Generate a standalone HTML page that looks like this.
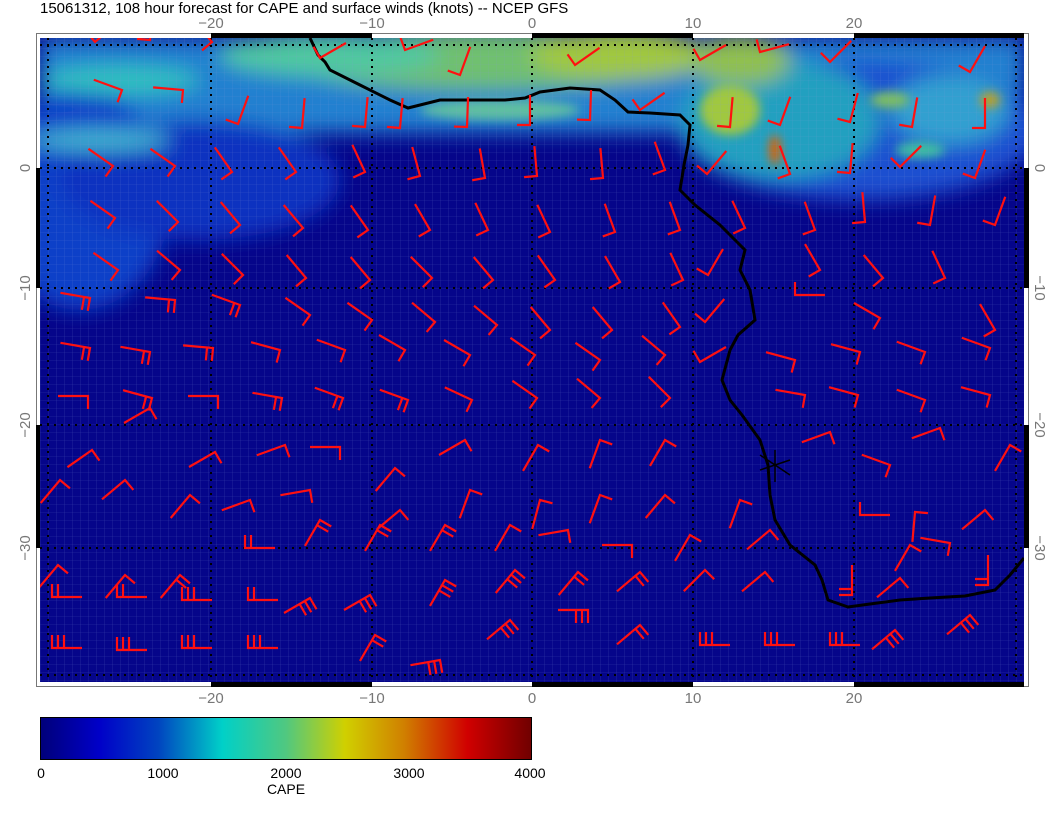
<!DOCTYPE html>
<html><head><meta charset="utf-8"><style>
html,body{margin:0;padding:0;background:#fff;}
body{width:1056px;height:816px;overflow:hidden;font-family:"Liberation Sans",sans-serif;}
</style></head><body>
<svg width="1056" height="816" viewBox="0 0 1056 816" xmlns="http://www.w3.org/2000/svg">
<defs>
<linearGradient id="cb" x1="0" x2="1">
<stop offset="0" stop-color="#00007a"/><stop offset="0.12" stop-color="#0000c8"/><stop offset="0.24" stop-color="#0044c0"/><stop offset="0.37" stop-color="#00d0c8"/><stop offset="0.5" stop-color="#50c880"/><stop offset="0.62" stop-color="#d0d000"/><stop offset="0.74" stop-color="#d08000"/><stop offset="0.87" stop-color="#d00000"/><stop offset="1" stop-color="#700000"/>
</linearGradient>
<filter id="bl" x="-30%" y="-30%" width="160%" height="160%"><feGaussianBlur stdDeviation="10"/></filter>
<filter id="bl2" x="-30%" y="-30%" width="160%" height="160%"><feGaussianBlur stdDeviation="5"/></filter>
<clipPath id="mc"><rect x="40" y="38" width="984" height="644"/></clipPath>
<symbol id="b1" overflow="visible"><path d="M0 -30 L0 0 L-13 0" fill="none" stroke="#ff1010" stroke-width="2.2"/></symbol>
<symbol id="b2" overflow="visible"><path d="M0 -30 L0 0 L-13 0 M0 -6 L-13 -6" fill="none" stroke="#ff1010" stroke-width="2.2"/></symbol>
<symbol id="b3" overflow="visible"><path d="M0 -30 L0 0 L-13 0 M0 -6 L-13 -6 M0 -12 L-13 -12" fill="none" stroke="#ff1010" stroke-width="2.2"/></symbol>
<pattern id="gr" width="8" height="8" patternUnits="userSpaceOnUse"><path d="M0 0H8M0 0V8" stroke="#8a9ad8" stroke-width="0.6" opacity="0.35"/></pattern>
</defs>
<text x="40" y="13" font-size="15" fill="#000">15061312, 108 hour forecast for CAPE and surface winds (knots) -- NCEP GFS</text>
<!-- frame -->
<rect x="36.5" y="33.5" width="992" height="653" fill="#fff" stroke="#777" stroke-width="1"/>
<g fill="#000">
<rect x="211" y="33" width="161" height="5"/><rect x="532" y="33" width="161" height="5"/><rect x="854" y="33" width="170" height="5"/>
<rect x="211" y="682" width="161" height="5"/><rect x="532" y="682" width="161" height="5"/><rect x="854" y="682" width="170" height="5"/>
<rect x="36" y="168" width="5" height="120"/><rect x="36" y="425" width="5" height="123"/>
<rect x="1024" y="168" width="5" height="120"/><rect x="1024" y="425" width="5" height="123"/>
</g>
<g clip-path="url(#mc)">
<rect x="40" y="38" width="984" height="644" fill="#05058a"/>
<g filter="url(#bl)">
<rect x="40" y="38" width="984" height="95" fill="#2080d0"/>
<ellipse cx="80" cy="200" rx="90" ry="110" fill="#1040c8"/>
<ellipse cx="200" cy="180" rx="140" ry="60" fill="#0a30c0"/>
<ellipse cx="860" cy="130" rx="180" ry="70" fill="#1a50d0"/>
<ellipse cx="780" cy="120" rx="100" ry="60" fill="#20a0c0"/>
<ellipse cx="480" cy="60" rx="200" ry="30" fill="#70c070"/>
<ellipse cx="620" cy="55" rx="90" ry="25" fill="#a0c840"/>
<ellipse cx="330" cy="55" rx="110" ry="22" fill="#50c8a0"/>
<ellipse cx="120" cy="80" rx="80" ry="15" fill="#30c0c0"/>
<ellipse cx="100" cy="140" rx="70" ry="12" fill="#40b0d0"/>
<ellipse cx="740" cy="60" rx="50" ry="25" fill="#90c050"/>
<ellipse cx="950" cy="110" rx="60" ry="35" fill="#30a0d0"/>
</g>
<g filter="url(#bl2)">
<ellipse cx="775" cy="150" rx="6" ry="15" fill="#e06000"/>
<ellipse cx="920" cy="150" rx="25" ry="8" fill="#40c0a0"/>
<ellipse cx="890" cy="100" rx="20" ry="8" fill="#80c060"/>
<ellipse cx="990" cy="100" rx="10" ry="8" fill="#c0a020"/>
<ellipse cx="730" cy="110" rx="30" ry="25" fill="#a0c840"/>
<ellipse cx="500" cy="110" rx="80" ry="10" fill="#60c0a0"/>
</g>
<rect x="40" y="38" width="984" height="644" fill="url(#gr)"/>
<g stroke="#000" stroke-width="2" stroke-dasharray="2,5" fill="none">
<path d="M211 38V682M372 38V682M532 38V682M693 38V682M854 38V682M48 38V682M1016 38V682M40 45H1024M40 168H1024M40 288H1024M40 425H1024M40 548H1024M40 675H1024"/>
</g>
<path d="M310 38 L318 55 L325 62 L330 70 L360 85 L390 100 L408 108 L440 100 L470 100 L505 100 L525 98 L540 92 L570 88 L600 90 L615 100 L628 112 L650 113 L680 115 L690 125 L688 145 L684 165 L680 190 L695 205 L720 225 L738 243 L745 250 L740 270 L750 290 L755 320 L738 335 L730 350 L722 380 L730 400 L742 415 L760 440 L768 465 L770 495 L775 520 L790 545 L815 565 L822 580 L828 600 L848 607 L870 604 L900 600 L930 598 L965 596 L995 590 L1010 575 L1024 558" fill="none" stroke="#000" stroke-width="3"/>
<path d="M760 455 L790 475 M775 450 L775 482 M760 470 L790 460" stroke="#000" stroke-width="1.5"/>
<g>
<!-- row 0 -->
<use href="#b1" transform="translate(95,42) rotate(50)"/><use href="#b1" transform="translate(150,40) rotate(5)"/><use href="#b1" transform="translate(212,42) rotate(-40)"/><use href="#b1" transform="translate(320,58) rotate(60)"/><use href="#b1" transform="translate(405,50) rotate(70)"/><use href="#b1" transform="translate(460,75) rotate(20)"/><use href="#b1" transform="translate(575,65) rotate(55)"/><use href="#b1" transform="translate(700,60) rotate(60)"/><use href="#b1" transform="translate(760,52) rotate(75)"/><use href="#b1" transform="translate(830,62) rotate(45)"/><use href="#b1" transform="translate(970,72) rotate(30)"/>
<!-- row 1 -->
<use href="#b1" transform="translate(122,90) rotate(-70)"/><use href="#b1" transform="translate(183,90) rotate(-85)"/><use href="#b1" transform="translate(238,124) rotate(20)"/><use href="#b1" transform="translate(302,128) rotate(5)"/><use href="#b1" transform="translate(365,127) rotate(5)"/><use href="#b1" transform="translate(400,128) rotate(5)"/><use href="#b1" transform="translate(467,127) rotate(2)"/><use href="#b1" transform="translate(530,125) rotate(0)"/><use href="#b1" transform="translate(590,120) rotate(2)"/><use href="#b1" transform="translate(640,110) rotate(55)"/><use href="#b1" transform="translate(730,127) rotate(5)"/><use href="#b1" transform="translate(780,125) rotate(20)"/><use href="#b1" transform="translate(850,122) rotate(15)"/><use href="#b1" transform="translate(912,127) rotate(10)"/><use href="#b1" transform="translate(985,128) rotate(0)"/>
<!-- row 2 -->
<use href="#b1" transform="translate(113,166) rotate(-55)"/><use href="#b1" transform="translate(175,166) rotate(-55)"/><use href="#b1" transform="translate(232,172) rotate(-35)"/><use href="#b1" transform="translate(296,172) rotate(-35)"/><use href="#b1" transform="translate(365,172) rotate(-25)"/><use href="#b1" transform="translate(420,176) rotate(-15)"/><use href="#b1" transform="translate(485,178) rotate(-10)"/><use href="#b1" transform="translate(537,176) rotate(-5)"/><use href="#b1" transform="translate(603,178) rotate(-5)"/><use href="#b1" transform="translate(665,170) rotate(-20)"/><use href="#b1" transform="translate(707,174) rotate(40)"/><use href="#b1" transform="translate(790,174) rotate(-20)"/><use href="#b1" transform="translate(850,173) rotate(5)"/><use href="#b1" transform="translate(900,167) rotate(45)"/><use href="#b1" transform="translate(975,178) rotate(20)"/>
<!-- row 3 -->
<use href="#b1" transform="translate(115,218) rotate(-55)"/><use href="#b1" transform="translate(178,222) rotate(-45)"/><use href="#b1" transform="translate(240,225) rotate(-40)"/><use href="#b1" transform="translate(303,228) rotate(-40)"/><use href="#b1" transform="translate(368,230) rotate(-35)"/><use href="#b1" transform="translate(430,230) rotate(-30)"/><use href="#b1" transform="translate(488,230) rotate(-25)"/><use href="#b1" transform="translate(550,232) rotate(-25)"/><use href="#b1" transform="translate(615,232) rotate(-20)"/><use href="#b1" transform="translate(680,230) rotate(-20)"/><use href="#b1" transform="translate(745,228) rotate(-25)"/><use href="#b1" transform="translate(815,230) rotate(-20)"/><use href="#b1" transform="translate(865,222) rotate(-5)"/><use href="#b1" transform="translate(930,225) rotate(10)"/><use href="#b1" transform="translate(995,225) rotate(20)"/>
<!-- row 4 -->
<use href="#b1" transform="translate(118,270) rotate(-55)"/><use href="#b1" transform="translate(180,270) rotate(-50)"/><use href="#b1" transform="translate(243,275) rotate(-45)"/><use href="#b1" transform="translate(306,278) rotate(-40)"/><use href="#b1" transform="translate(370,280) rotate(-40)"/><use href="#b1" transform="translate(432,278) rotate(-45)"/><use href="#b1" transform="translate(493,280) rotate(-40)"/><use href="#b1" transform="translate(555,280) rotate(-35)"/><use href="#b1" transform="translate(620,282) rotate(-30)"/><use href="#b1" transform="translate(683,280) rotate(-25)"/><use href="#b1" transform="translate(708,275) rotate(30)"/><use href="#b1" transform="translate(820,270) rotate(-30)"/><use href="#b1" transform="translate(883,278) rotate(-40)"/><use href="#b1" transform="translate(945,278) rotate(-25)"/>
<!-- row 5 -->
<use href="#b2" transform="translate(90,298) rotate(-80)"/><use href="#b2" transform="translate(175,300) rotate(-85)"/><use href="#b2" transform="translate(240,305) rotate(-70)"/><use href="#b1" transform="translate(310,315) rotate(-55)"/><use href="#b1" transform="translate(372,320) rotate(-55)"/><use href="#b1" transform="translate(435,322) rotate(-50)"/><use href="#b1" transform="translate(497,325) rotate(-50)"/><use href="#b1" transform="translate(550,330) rotate(-40)"/><use href="#b1" transform="translate(612,330) rotate(-40)"/><use href="#b1" transform="translate(680,327) rotate(-35)"/><use href="#b1" transform="translate(705,322) rotate(40)"/><use href="#b1" transform="translate(795,295) rotate(90)"/><use href="#b1" transform="translate(880,318) rotate(-60)"/><use href="#b1" transform="translate(995,330) rotate(-30)"/>
<!-- row 6 -->
<use href="#b2" transform="translate(90,348) rotate(-80)"/><use href="#b2" transform="translate(150,352) rotate(-80)"/><use href="#b2" transform="translate(213,348) rotate(-85)"/><use href="#b1" transform="translate(280,350) rotate(-75)"/><use href="#b1" transform="translate(345,350) rotate(-70)"/><use href="#b1" transform="translate(405,350) rotate(-60)"/><use href="#b1" transform="translate(470,355) rotate(-60)"/><use href="#b1" transform="translate(535,355) rotate(-55)"/><use href="#b1" transform="translate(600,360) rotate(-55)"/><use href="#b1" transform="translate(665,355) rotate(-50)"/><use href="#b1" transform="translate(700,362) rotate(60)"/><use href="#b1" transform="translate(795,360) rotate(-75)"/><use href="#b1" transform="translate(860,352) rotate(-75)"/><use href="#b1" transform="translate(925,352) rotate(-70)"/><use href="#b1" transform="translate(990,348) rotate(-70)"/>
<!-- row 7 -->
<use href="#b1" transform="translate(88,396) rotate(-90)"/><use href="#b2" transform="translate(152,398) rotate(-75)"/><use href="#b1" transform="translate(218,396) rotate(-90)"/><use href="#b2" transform="translate(282,398) rotate(-80)"/><use href="#b2" transform="translate(343,398) rotate(-70)"/><use href="#b2" transform="translate(408,400) rotate(-70)"/><use href="#b1" transform="translate(472,400) rotate(-65)"/><use href="#b1" transform="translate(537,398) rotate(-55)"/><use href="#b1" transform="translate(600,398) rotate(-50)"/><use href="#b1" transform="translate(670,398) rotate(-45)"/><use href="#b1" transform="translate(805,395) rotate(-80)"/><use href="#b1" transform="translate(858,395) rotate(-75)"/><use href="#b1" transform="translate(925,400) rotate(-70)"/><use href="#b1" transform="translate(990,395) rotate(-75)"/>
<!-- row 8 -->
<use href="#b1" transform="translate(92,450) rotate(-125)"/><use href="#b1" transform="translate(150,408) rotate(-120)"/><use href="#b1" transform="translate(215,452) rotate(-120)"/><use href="#b1" transform="translate(285,445) rotate(-110)"/><use href="#b1" transform="translate(340,447) rotate(-90)"/><use href="#b1" transform="translate(395,468) rotate(-140)"/><use href="#b1" transform="translate(465,440) rotate(-120)"/><use href="#b1" transform="translate(538,445) rotate(-150)"/><use href="#b1" transform="translate(600,440) rotate(-160)"/><use href="#b1" transform="translate(665,440) rotate(-150)"/><use href="#b1" transform="translate(830,432) rotate(-110)"/><use href="#b1" transform="translate(890,465) rotate(-70)"/><use href="#b1" transform="translate(940,428) rotate(-110)"/><use href="#b1" transform="translate(1010,445) rotate(-150)"/>
<!-- row 9 -->
<use href="#b1" transform="translate(60,480) rotate(-140)"/><use href="#b1" transform="translate(125,480) rotate(-130)"/><use href="#b1" transform="translate(190,495) rotate(-140)"/><use href="#b1" transform="translate(250,500) rotate(-110)"/><use href="#b1" transform="translate(310,490) rotate(-100)"/><use href="#b1" transform="translate(400,510) rotate(-130)"/><use href="#b1" transform="translate(470,490) rotate(-160)"/><use href="#b1" transform="translate(540,500) rotate(-165)"/><use href="#b1" transform="translate(600,495) rotate(-160)"/><use href="#b1" transform="translate(665,495) rotate(-140)"/><use href="#b1" transform="translate(740,500) rotate(-160)"/><use href="#b1" transform="translate(860,515) rotate(90)"/><use href="#b1" transform="translate(915,512) rotate(-175)"/><use href="#b1" transform="translate(985,510) rotate(-130)"/>
<!-- row 10 -->
<use href="#b1" transform="translate(58,565) rotate(-140)"/><use href="#b1" transform="translate(125,575) rotate(-140)"/><use href="#b2" transform="translate(180,575) rotate(-140)"/><use href="#b2" transform="translate(245,548) rotate(90)"/><use href="#b2" transform="translate(320,520) rotate(-150)"/><use href="#b2" transform="translate(380,525) rotate(-150)"/><use href="#b2" transform="translate(445,525) rotate(-150)"/><use href="#b1" transform="translate(510,525) rotate(-150)"/><use href="#b1" transform="translate(568,530) rotate(-100)"/><use href="#b1" transform="translate(632,545) rotate(-90)"/><use href="#b1" transform="translate(690,535) rotate(-150)"/><use href="#b1" transform="translate(770,530) rotate(-130)"/><use href="#b1" transform="translate(910,545) rotate(-150)"/><use href="#b1" transform="translate(950,543) rotate(-80)"/>
<!-- row 11 -->
<use href="#b2" transform="translate(52,597) rotate(90)"/><use href="#b2" transform="translate(117,597) rotate(90)"/><use href="#b3" transform="translate(182,600) rotate(90)"/><use href="#b2" transform="translate(248,600) rotate(90)"/><use href="#b3" transform="translate(310,598) rotate(-120)"/><use href="#b3" transform="translate(370,595) rotate(-120)"/><use href="#b3" transform="translate(445,580) rotate(-150)"/><use href="#b3" transform="translate(515,570) rotate(-140)"/><use href="#b2" transform="translate(578,572) rotate(-140)"/><use href="#b2" transform="translate(640,572) rotate(-130)"/><use href="#b1" transform="translate(705,570) rotate(-135)"/><use href="#b1" transform="translate(765,572) rotate(-130)"/><use href="#b2" transform="translate(852,595) rotate(0)"/><use href="#b1" transform="translate(900,578) rotate(-130)"/><use href="#b2" transform="translate(988,585) rotate(0)"/>
<!-- row 12 -->
<use href="#b3" transform="translate(52,648) rotate(90)"/><use href="#b3" transform="translate(117,650) rotate(90)"/><use href="#b3" transform="translate(182,648) rotate(90)"/><use href="#b3" transform="translate(248,648) rotate(90)"/><use href="#b2" transform="translate(375,635) rotate(-150)"/><use href="#b3" transform="translate(440,660) rotate(-100)"/><use href="#b3" transform="translate(510,620) rotate(-130)"/><use href="#b3" transform="translate(588,610) rotate(-90)"/><use href="#b2" transform="translate(640,625) rotate(-130)"/><use href="#b3" transform="translate(700,645) rotate(90)"/><use href="#b3" transform="translate(765,645) rotate(90)"/><use href="#b3" transform="translate(830,645) rotate(90)"/><use href="#b3" transform="translate(895,630) rotate(-130)"/><use href="#b3" transform="translate(970,615) rotate(-130)"/>
</g>
</g>
<g font-size="15" fill="#777" text-anchor="middle">
<text x="211" y="28">−20</text><text x="372" y="28">−10</text><text x="532" y="28">0</text><text x="693" y="28">10</text><text x="854" y="28">20</text>
<text x="211" y="703">−20</text><text x="372" y="703">−10</text><text x="532" y="703">0</text><text x="693" y="703">10</text><text x="854" y="703">20</text>
<text transform="translate(30,168) rotate(-90)">0</text><text transform="translate(30,288) rotate(-90)">−10</text><text transform="translate(30,425) rotate(-90)">−20</text><text transform="translate(30,548) rotate(-90)">−30</text>
<text transform="translate(1035,168) rotate(90)">0</text><text transform="translate(1035,288) rotate(90)">−10</text><text transform="translate(1035,425) rotate(90)">−20</text><text transform="translate(1035,548) rotate(90)">−30</text>
</g>
<rect x="40.5" y="717.5" width="491" height="42" fill="url(#cb)" stroke="#000" stroke-width="1"/>
<g font-size="14" fill="#000" text-anchor="middle">
<text x="41" y="778">0</text><text x="163" y="778">1000</text><text x="286" y="778">2000</text><text x="409" y="778">3000</text><text x="530" y="778">4000</text>
<text x="286" y="794">CAPE</text>
</g>
</svg>
</body></html>
